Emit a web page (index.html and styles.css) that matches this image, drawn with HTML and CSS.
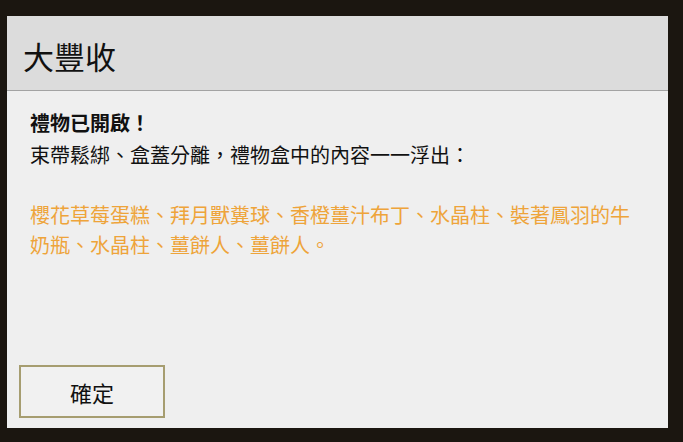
FILE: index.html
```html
<!DOCTYPE html>
<html lang="zh-Hant">
<head>
  <meta charset="UTF-8">
  <title>大豐收</title>
  <link rel="stylesheet" href="styles.css">
</head>
<body>
  <div class="dialog">
    <div class="dialog-head">
      <h1>大豐收</h1>
    </div>
    <div class="dialog-body">
      <p class="lead">禮物已開啟！</p>
      <p>束帶鬆綁、盒蓋分離，禮物盒中的內容一一浮出：</p>
      <p class="items">櫻花草莓蛋糕、拜月獸糞球、香橙薑汁布丁、水晶柱、裝著鳳羽的牛奶瓶、水晶柱、薑餅人、薑餅人。</p>
    </div>
    <div class="dialog-foot">
      <button type="button">確定</button>
    </div>
  </div>
</body>
</html>
```

FILE: styles.css
```css
body { margin: 0; height: 442px; background: #1b1610; font-family: "Noto Sans CJK TC", "Noto Sans", sans-serif; overflow: hidden; }
.dialog { width: 661px; height: 412px; margin: 16px 0 0 7px; display: flex; flex-direction: column; background: #efefef; }
.dialog-head { border-bottom: 1px solid #a3a3a3; background: #dcdcdc; display: flex; align-items: center; padding: 5px 0 0 16px; box-sizing: border-box; height: 75px; }
.dialog-head h1 { margin: 0; font-size: 31px; font-weight: 400; color: #111; line-height: 1; }
.dialog-body { flex: 1; padding: 17px 23px 0; color: #111; font-size: 20px; line-height: 30px; }
.dialog-body p { margin: 0; }
.lead { font-weight: 700; margin-bottom: 2px !important; }
.items { color: #eea43a; margin-top: 30px !important; }
.dialog-foot { padding: 0 0 10px 12px; }
button { width: 146px; height: 53px; border: 2px solid #a69d70; background: #f1f1f1; font-family: inherit; font-size: 22px; color: #111; padding: 0; }
```
